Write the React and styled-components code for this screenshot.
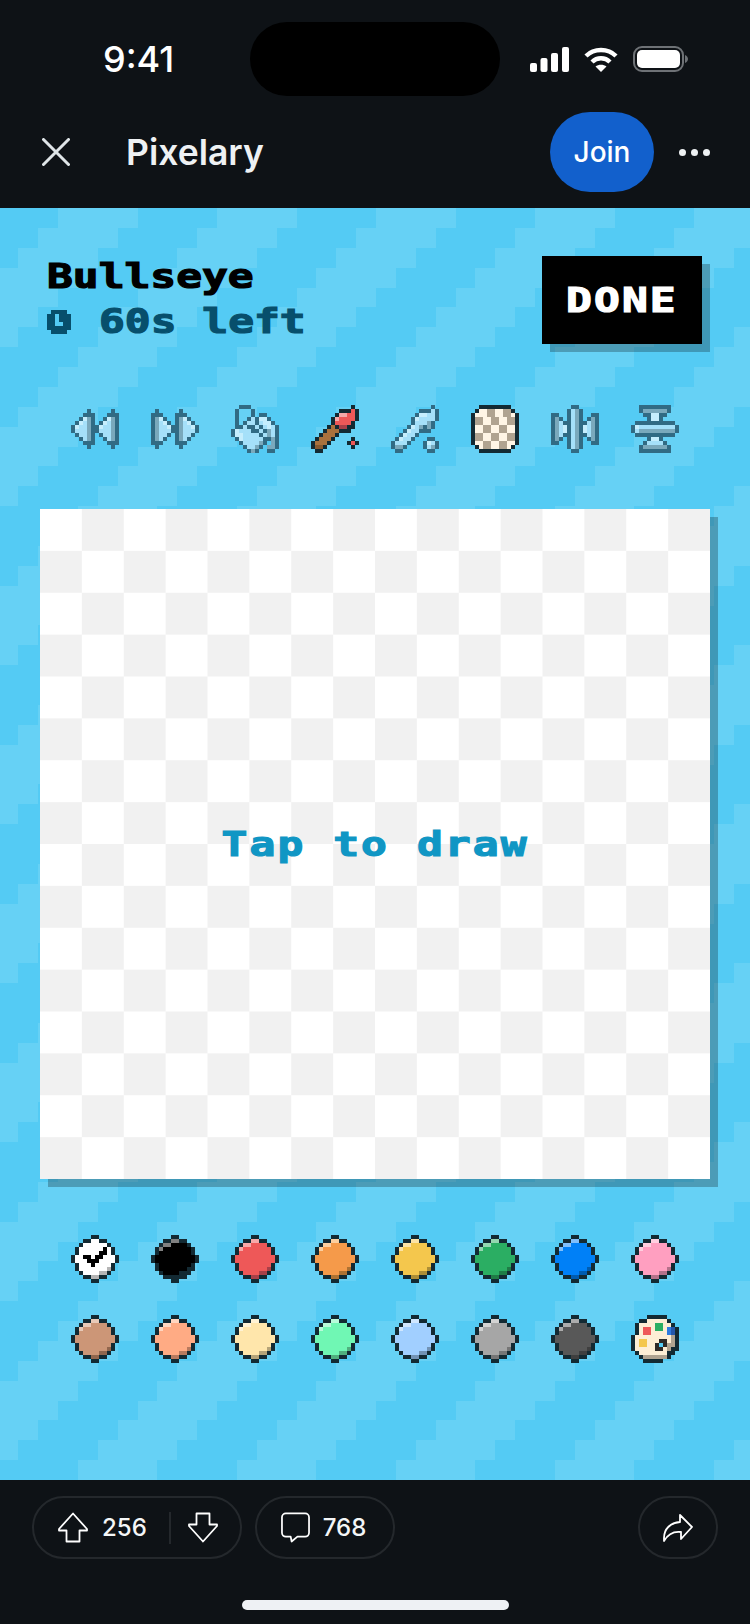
import React from 'react';
import styled, { createGlobalStyle } from 'styled-components';

const DARK = '#54cbf4';
const LIGHT = '#66d1f5';

// 8 rows of stair steps, one unit shift per row
const tileRows = Array.from({ length: 8 }, (_, r) => {
  const x = (8 - r) % 8;
  return `<rect x='${x}' y='${r}' width='4' height='1'/><rect x='${x - 8}' y='${r}' width='4' height='1'/>`;
}).join('');
const tile = encodeURIComponent(
  `<svg xmlns='http://www.w3.org/2000/svg' width='159' height='159' viewBox='0 0 8 8' shape-rendering='crispEdges'><rect width='8' height='8' fill='${DARK}'/><g fill='${LIGHT}'>${tileRows}</g></svg>`
);

const GlobalStyle = createGlobalStyle`
  html, body {
    margin: 0;
    padding: 0;
    background: #0e1216;
    overflow: hidden;
  }
  * { box-sizing: border-box; }
`;

const Screen = styled.div`
  width: 750px;
  height: 1624px;
  display: flex;
  flex-direction: column;
  font-family: Inter, "Liberation Sans", sans-serif;
  color: #fff;
  background: #0e1216;
`;

const Top = styled.header`
  height: 208px;
  padding-top: 22px;
`;

const StatusBar = styled.div`
  display: grid;
  grid-template-columns: 250px 250px 250px;
  height: 74px;
  align-items: center;
`;

const Time = styled.div`
  padding-left: 103px;
  font-size: 36px;
  font-weight: 500;
`;

const Island = styled.div`
  height: 74px;
  border-radius: 37px;
  background: #000;
`;

const StatusIcons = styled.div`
  display: flex;
  align-items: center;
  gap: 15px;
  padding-left: 30px;
`;

const NavRow = styled.div`
  display: flex;
  align-items: center;
  height: 80px;
  margin-top: 16px;
  padding-left: 42px;
`;

const Title = styled.div`
  margin-left: 56px;
  font-size: 35.5px;
  font-weight: 600;
  color: #eef1f3;
  flex: 1;
`;

const JoinButton = styled.div`
  width: 104px;
  height: 80px;
  border-radius: 40px;
  background: #1260cc;
  display: flex;
  align-items: center;
  justify-content: center;
  font-size: 28px;
  font-weight: 500;
`;

const More = styled.div`
  display: flex;
  gap: 5px;
  margin: 0 40px 0 25px;
`;

const Dot = styled.span`
  width: 7px;
  height: 7px;
  border-radius: 50%;
  background: #eef1f3;
`;

const Stage = styled.main`
  flex: 1;
  background-color: ${DARK};
  background-image: url("data:image/svg+xml,${tile}");
  background-size: 159px 159px;
  background-position: 58px 0;
`;

const GameHead = styled.div`
  display: flex;
  justify-content: space-between;
  padding: 48px 48px 0 47px;
  height: 136px;
`;

const Info = styled.div`
  display: flex;
  flex-direction: column;
  gap: 6px;
  padding-top: 1px;
`;

const PixelText = styled.span`
  display: block;
  font-family: "DejaVu Sans Mono", "Liberation Mono", monospace;
  font-weight: 700;
  font-size: 33px;
  line-height: 39px;
  white-space: pre;
  letter-spacing: ${(p) => p.$spacing || 0}px;
  color: ${(p) => p.$color || '#000'};
  -webkit-text-stroke: 1.2px ${(p) => p.$color || '#000'};
  transform: scaleX(1.3);
  transform-origin: ${(p) => p.$origin || 'left center'};
`;

const TimerRow = styled.div`
  display: flex;
  align-items: center;
  gap: 28px;
`;

const DoneButton = styled.div`
  width: 160px;
  height: 88px;
  background: #000;
  box-shadow: 8px 8px 0 rgba(0, 0, 0, 0.25);
  display: flex;
  align-items: center;
  justify-content: center;
`;

const SpriteRow = styled.div`
  display: flex;
  gap: 32px;
  padding-left: 71px;
  margin-top: ${(p) => p.$top}px;
`;

const SpriteSvg = styled.svg`
  display: block;
  flex: none;
  shape-rendering: crispEdges;
`;

const Board = styled.div`
  width: 670px;
  height: 670px;
  margin: 56px 0 0 40px;
  background: conic-gradient(#f1f1f1 25%, #fff 0 50%, #f1f1f1 0 75%, #fff 0);
  background-size: 83.75px 83.75px;
  box-shadow: 8px 8px 0 rgba(0, 0, 0, 0.25);
  display: flex;
  align-items: center;
  justify-content: center;
`;

const Bottom = styled.footer`
  height: 144px;
  padding: 16px 32px 0 32px;
  background: #0e1216;
`;

const ActionRow = styled.div`
  display: flex;
  gap: 13px;
`;

const Pill = styled.div`
  height: 63px;
  border: 2px solid #24282c;
  border-radius: 32px;
  display: flex;
  align-items: center;
  padding: ${(p) => p.$padding || '0 24px'};
  margin-left: ${(p) => (p.$push ? 'auto' : '0')};
`;

const Count = styled.span`
  font-size: 24px;
  font-weight: 500;
  margin-left: ${(p) => p.$gap || 14}px;
  color: #f4f6f7;
`;

const Divider = styled.span`
  width: 2px;
  height: 32px;
  background: #24282c;
  margin: 0 17px 0 22px;
`;

const HomeBar = styled.div`
  width: 267px;
  height: 10px;
  border-radius: 5px;
  background: #eef1f4;
  margin: 41px auto 0;
`;

const Sprite = ({ rows, colors, cell = 4 }) => (
  <SpriteSvg width={rows[0].length * cell} height={rows.length * cell} viewBox={`0 0 ${rows[0].length} ${rows.length}`}>
    {rows.flatMap((row, y) =>
      [...row].map((c, x) => (colors[c] ? <rect key={`${x}-${y}`} x={x} y={y} width="1" height="1" fill={colors[c]} /> : null))
    )}
  </SpriteSvg>
);

const toolColors = { D: '#316b84', G: '#7aa9bc', L: '#a5e0f9', W: '#c6eefd' };

const rewind = [
  '............',
  '....D.....D.',
  '...DDD...DDD',
  '..DWGD..DWGD',
  '.DWLGD.DWLGD',
  'DWLLGDDWLLGD',
  'DLLLGDDLLLGD',
  '.DLLGD.DLLGD',
  '..DLGD..DLGD',
  '...DDD...DDD',
  '....D.....D.',
  '............',
];
const forward = rewind.map((r) => [...r].reverse().join(''));

const bucket = [
  '..DDD.......',
  '.D...D......',
  '.D...D.DD...',
  '.D..DLDWWD..',
  '.D.DLLDLWWD.',
  '.DDLDDLDLWLD',
  'DWLLLDDLDGLD',
  'DWWLLLLDLGLD',
  '.DWLLLLLDDGD',
  '..DLLLLGD.GD',
  '...DLLGD.GGD',
  '....DGD..DD.',
];

const dropper = [
  '..........D.',
  '.......DDDLD',
  '......DWWLLD',
  '.....DWLLLLD',
  '.....DLLLGD.',
  '....DWLGDGD.',
  '...DWLLDDD..',
  '..DWLLD.....',
  '.DWLLD...DD.',
  'DLLLD...DWLD',
  'DGGD....DLGD',
  '.DD......DD.',
];

const mirrorH = [
  '.....DD.....',
  '....DLGD....',
  'DD..DLGD..DD',
  'DGD.DLGD.DGD',
  'DGLDDLGDDLGD',
  'DGLWDLGDWLGD',
  'DGLWDLGDWLGD',
  'DGLDDLGDDLGD',
  'DGD.DLGD.DGD',
  'DD..DLGD..DD',
  '....DLGD....',
  '.....DD.....',
];

const mirrorV = [
  '..DDDDDDDD..',
  '..DGGGGGGD..',
  '...DDWWDD...',
  '....DWWD....',
  '.DDDDDDDDDD.',
  'DWLLLLLLLLLD',
  'DLGGGGGGGGGD',
  '.DDDDDDDDDD.',
  '....DWWD....',
  '...DLLLLD...',
  '..DGGGGGGD..',
  '..DDDDDDDD..',
];

const brush = [
  '..........K.',
  '.......KKKRK',
  '......KPPRRK',
  '.....KPRRRRK',
  '.....KRRRRK.',
  '....KBKSSKK.',
  '...KBBBKKK..',
  '..KBBBK.....',
  '.KBBBK....K.',
  'KBBBK....KRK',
  'KDDK......K.',
  '.KK.........',
];
const brushColors = { K: '#132a33', R: '#ee5858', P: '#f6a9a9', S: '#a84048', B: '#a9713d', D: '#86592f' };

const eraser = [
  '..KKKKKKKK..',
  '.KCCTTCCTTK.',
  'KCCCTTCCTTCK',
  'KTTCCTTCCTTK',
  'KTTCCTTCCTTK',
  'KCCTTCCTTCCK',
  'KCCTTCCTTCCK',
  'KTTCCTTCCTTK',
  'KTTCCTTCCTTK',
  'KCCTTCCTTCCK',
  '.KCTTCCTTCK.',
  '..KKKKKKKK..',
];
const eraserColors = { K: '#132a33', C: '#fff5e5', T: '#b0a390' };

const swatch = [
  '.....DD.....',
  '...DDHHDD...',
  '..DHHMMMMD..',
  '.DHMMMMMMMD.',
  '.DMMMMMMMMD.',
  'DMMMMMMMMMMD',
  'DMMMMMMMMMMD',
  '.DMMMMMMMMD.',
  '.DMMMMMMMSD.',
  '..DMMMMSSD..',
  '...DDSSDD...',
  '.....DD.....',
];

const selected = [
  '.....DD.....',
  '...DDHHDD...',
  '..DHHMMMMD..',
  '.DHMMMMMXMD.',
  '.DMMMMMXXMD.',
  'DMMXXMXXMMMD',
  'DMMMXXXMMMMD',
  '.DMMMXMMMMD.',
  '.DMMMMMMMSD.',
  '..DMMMMSSD..',
  '...DDSSDD...',
  '.....DD.....',
];

const palette = [
  '....KKKKK...',
  '..KKCCCCCK..',
  '.KCCCCGGCCK.',
  '.KCRRCGGCBNK',
  '.KCRRCCCCBNK',
  'KCCCCCCCCCTK',
  'KCYYCCCXXCTK',
  'KCYYCCXOXTTK',
  'KCCCCCXXCTKK',
  '.KCCCCCCCKK.',
  '..KTTTTTTK..',
  '...KKKKK....',
];
const paletteColors = {
  K: '#132a33', C: '#fdeed5', T: '#b0a390', G: '#2bae63', R: '#ee5858', B: '#2f7be0', N: '#2456a8',
  Y: '#f4c74d', X: '#2e2a28', O: '#54cbf4',
};

const clock = [
  '.XXXX.',
  'XX.XXX',
  'XX.XXX',
  'XX..XX',
  'XXXXXX',
  '.XXXX.',
];

const swatchColors = (M, H, S) => ({ D: '#132a33', M, H, S, X: '#000' });

const rowOne = [
  ['#ffffff', '#ffffff', '#b5b5b5', selected],
  ['#000000', '#808080', '#132a33'],
  ['#ee5858', '#f6a9a9', '#a84048'],
  ['#f59a4a', '#fbcfa0', '#ae7232'],
  ['#f4c74d', '#fbe3a6', '#ad8e36'],
  ['#2bae63', '#95d7b1', '#1f7c46'],
  ['#0080f7', '#80bffb', '#005cb0'],
  ['#ff9fc0', '#ffcfe0', '#b5718a'],
];

const rowTwo = [
  ['#cc9677', '#e8cab8', '#91664d'],
  ['#ffab84', '#ffd6c0', '#b87a5e'],
  ['#ffe6ab', '#fff3d5', '#b6a478'],
  ['#70f7b4', '#b8fbda', '#50b07e'],
  ['#a1cfff', '#d0e7ff', '#7293b5'],
  ['#a6a6a6', '#d3d3d3', '#767676'],
  ['#585858', '#acacac', '#3f3f3f'],
];

const ArrowUp = ({ down }) => (
  <svg width="30" height="31" viewBox="0 0 30 31" fill="none" stroke="#fff" strokeWidth="1.8" strokeLinejoin="round" style={down ? { transform: 'rotate(180deg)' } : undefined}>
    <path d="M15 1.5 L29 17 V18.5 H21.5 V29.5 H8.5 V18.5 H1 V17 Z" />
  </svg>
);

const App = () => (
  <Screen>
    <GlobalStyle />
    <Top>
      <StatusBar>
        <Time>9:41</Time>
        <Island />
        <StatusIcons>
          <svg width="39" height="25" viewBox="0 0 39 25" fill="#fff">
            <rect x="0" y="16" width="7" height="9" rx="2" />
            <rect x="10.5" y="11" width="7" height="14" rx="2" />
            <rect x="21" y="6" width="7" height="19" rx="2" />
            <rect x="32" y="0" width="7" height="25" rx="2" />
          </svg>
          <svg width="34" height="25" viewBox="0 0 34 25" fill="none" stroke="#fff" strokeWidth="4.4">
            <path d="M2 9 C10 1 24 1 32 9" />
            <path d="M8 15 C13 10 21 10 26 15" />
            <path d="M17 25 L11.5 19.5 C14.5 17 19.5 17 22.5 19.5 Z" fill="#fff" stroke="none" />
          </svg>
          <svg width="55" height="26" viewBox="0 0 55 26" fill="none">
            <rect x="1" y="1" width="49" height="24" rx="8" stroke="#6e7276" strokeWidth="2" />
            <rect x="4" y="4" width="43" height="18" rx="5" fill="#fff" />
            <path d="M52 9 C54 10 55 11.500 55 13 C55 14.500 54 16 52 17 Z" fill="#6e7276" />
          </svg>
        </StatusIcons>
      </StatusBar>
      <NavRow>
        <svg width="28" height="28" viewBox="0 0 28 28" stroke="#dfe5e8" strokeWidth="3" strokeLinecap="round">
          <path d="M1.500 1.500 L26.500 26.500 M26.500 1.500 L1.500 26.500" />
        </svg>
        <Title>Pixelary</Title>
        <JoinButton>Join</JoinButton>
        <More>
          <Dot />
          <Dot />
          <Dot />
        </More>
      </NavRow>
    </Top>
    <Stage>
      <GameHead>
        <Info>
          <PixelText>Bullseye</PixelText>
          <TimerRow>
            <Sprite rows={clock} colors={{ X: '#074f6c' }} />
            <PixelText $color="#074f6c">60s left</PixelText>
          </TimerRow>
        </Info>
        <DoneButton>
          <PixelText $color="#fff" $spacing={1.6} $origin="center">DONE</PixelText>
        </DoneButton>
      </GameHead>
      <SpriteRow $top={61}>
        <Sprite rows={rewind} colors={toolColors} />
        <Sprite rows={forward} colors={toolColors} />
        <Sprite rows={bucket} colors={toolColors} />
        <Sprite rows={brush} colors={brushColors} />
        <Sprite rows={dropper} colors={toolColors} />
        <Sprite rows={eraser} colors={eraserColors} />
        <Sprite rows={mirrorH} colors={toolColors} />
        <Sprite rows={mirrorV} colors={toolColors} />
      </SpriteRow>
      <Board>
        <PixelText $color="#1096c4" $spacing={1.6} $origin="center">Tap to draw</PixelText>
      </Board>
      <SpriteRow $top={56}>
        {rowOne.map(([m, h, s, rows]) => (
          <Sprite key={m} rows={rows || swatch} colors={swatchColors(m, h, s)} />
        ))}
      </SpriteRow>
      <SpriteRow $top={32}>
        {rowTwo.map(([m, h, s]) => (
          <Sprite key={m} rows={swatch} colors={swatchColors(m, h, s)} />
        ))}
        <Sprite rows={palette} colors={paletteColors} />
      </SpriteRow>
    </Stage>
    <Bottom>
      <ActionRow>
        <Pill $padding="0 22px 0 24px">
          <ArrowUp />
          <Count>256</Count>
          <Divider />
          <ArrowUp down />
        </Pill>
        <Pill $padding="0 27px 0 24px">
          <svg width="29" height="31" viewBox="0 0 30 31" fill="none" stroke="#fff" strokeWidth="1.8" strokeLinejoin="round">
            <path d="M5 1 H25 A4 4 0 0 1 29 5 V21 A4 4 0 0 1 25 25 H17 L11 30 L10 25 H5 A4 4 0 0 1 1 21 V5 A4 4 0 0 1 5 1 Z" />
          </svg>
          <Count $gap={13}>768</Count>
        </Pill>
        <Pill $push $padding="0 23px">
          <svg width="30" height="28" viewBox="0 0 30 28" fill="none" stroke="#fff" strokeWidth="1.8" strokeLinejoin="round">
            <path d="M1 27 V24 C1 15 7 9 17 8 V1 L29 13 L18 25 V18 C10 17 5 20 1 27 Z" />
          </svg>
        </Pill>
      </ActionRow>
      <HomeBar />
    </Bottom>
  </Screen>
);

export default App;
